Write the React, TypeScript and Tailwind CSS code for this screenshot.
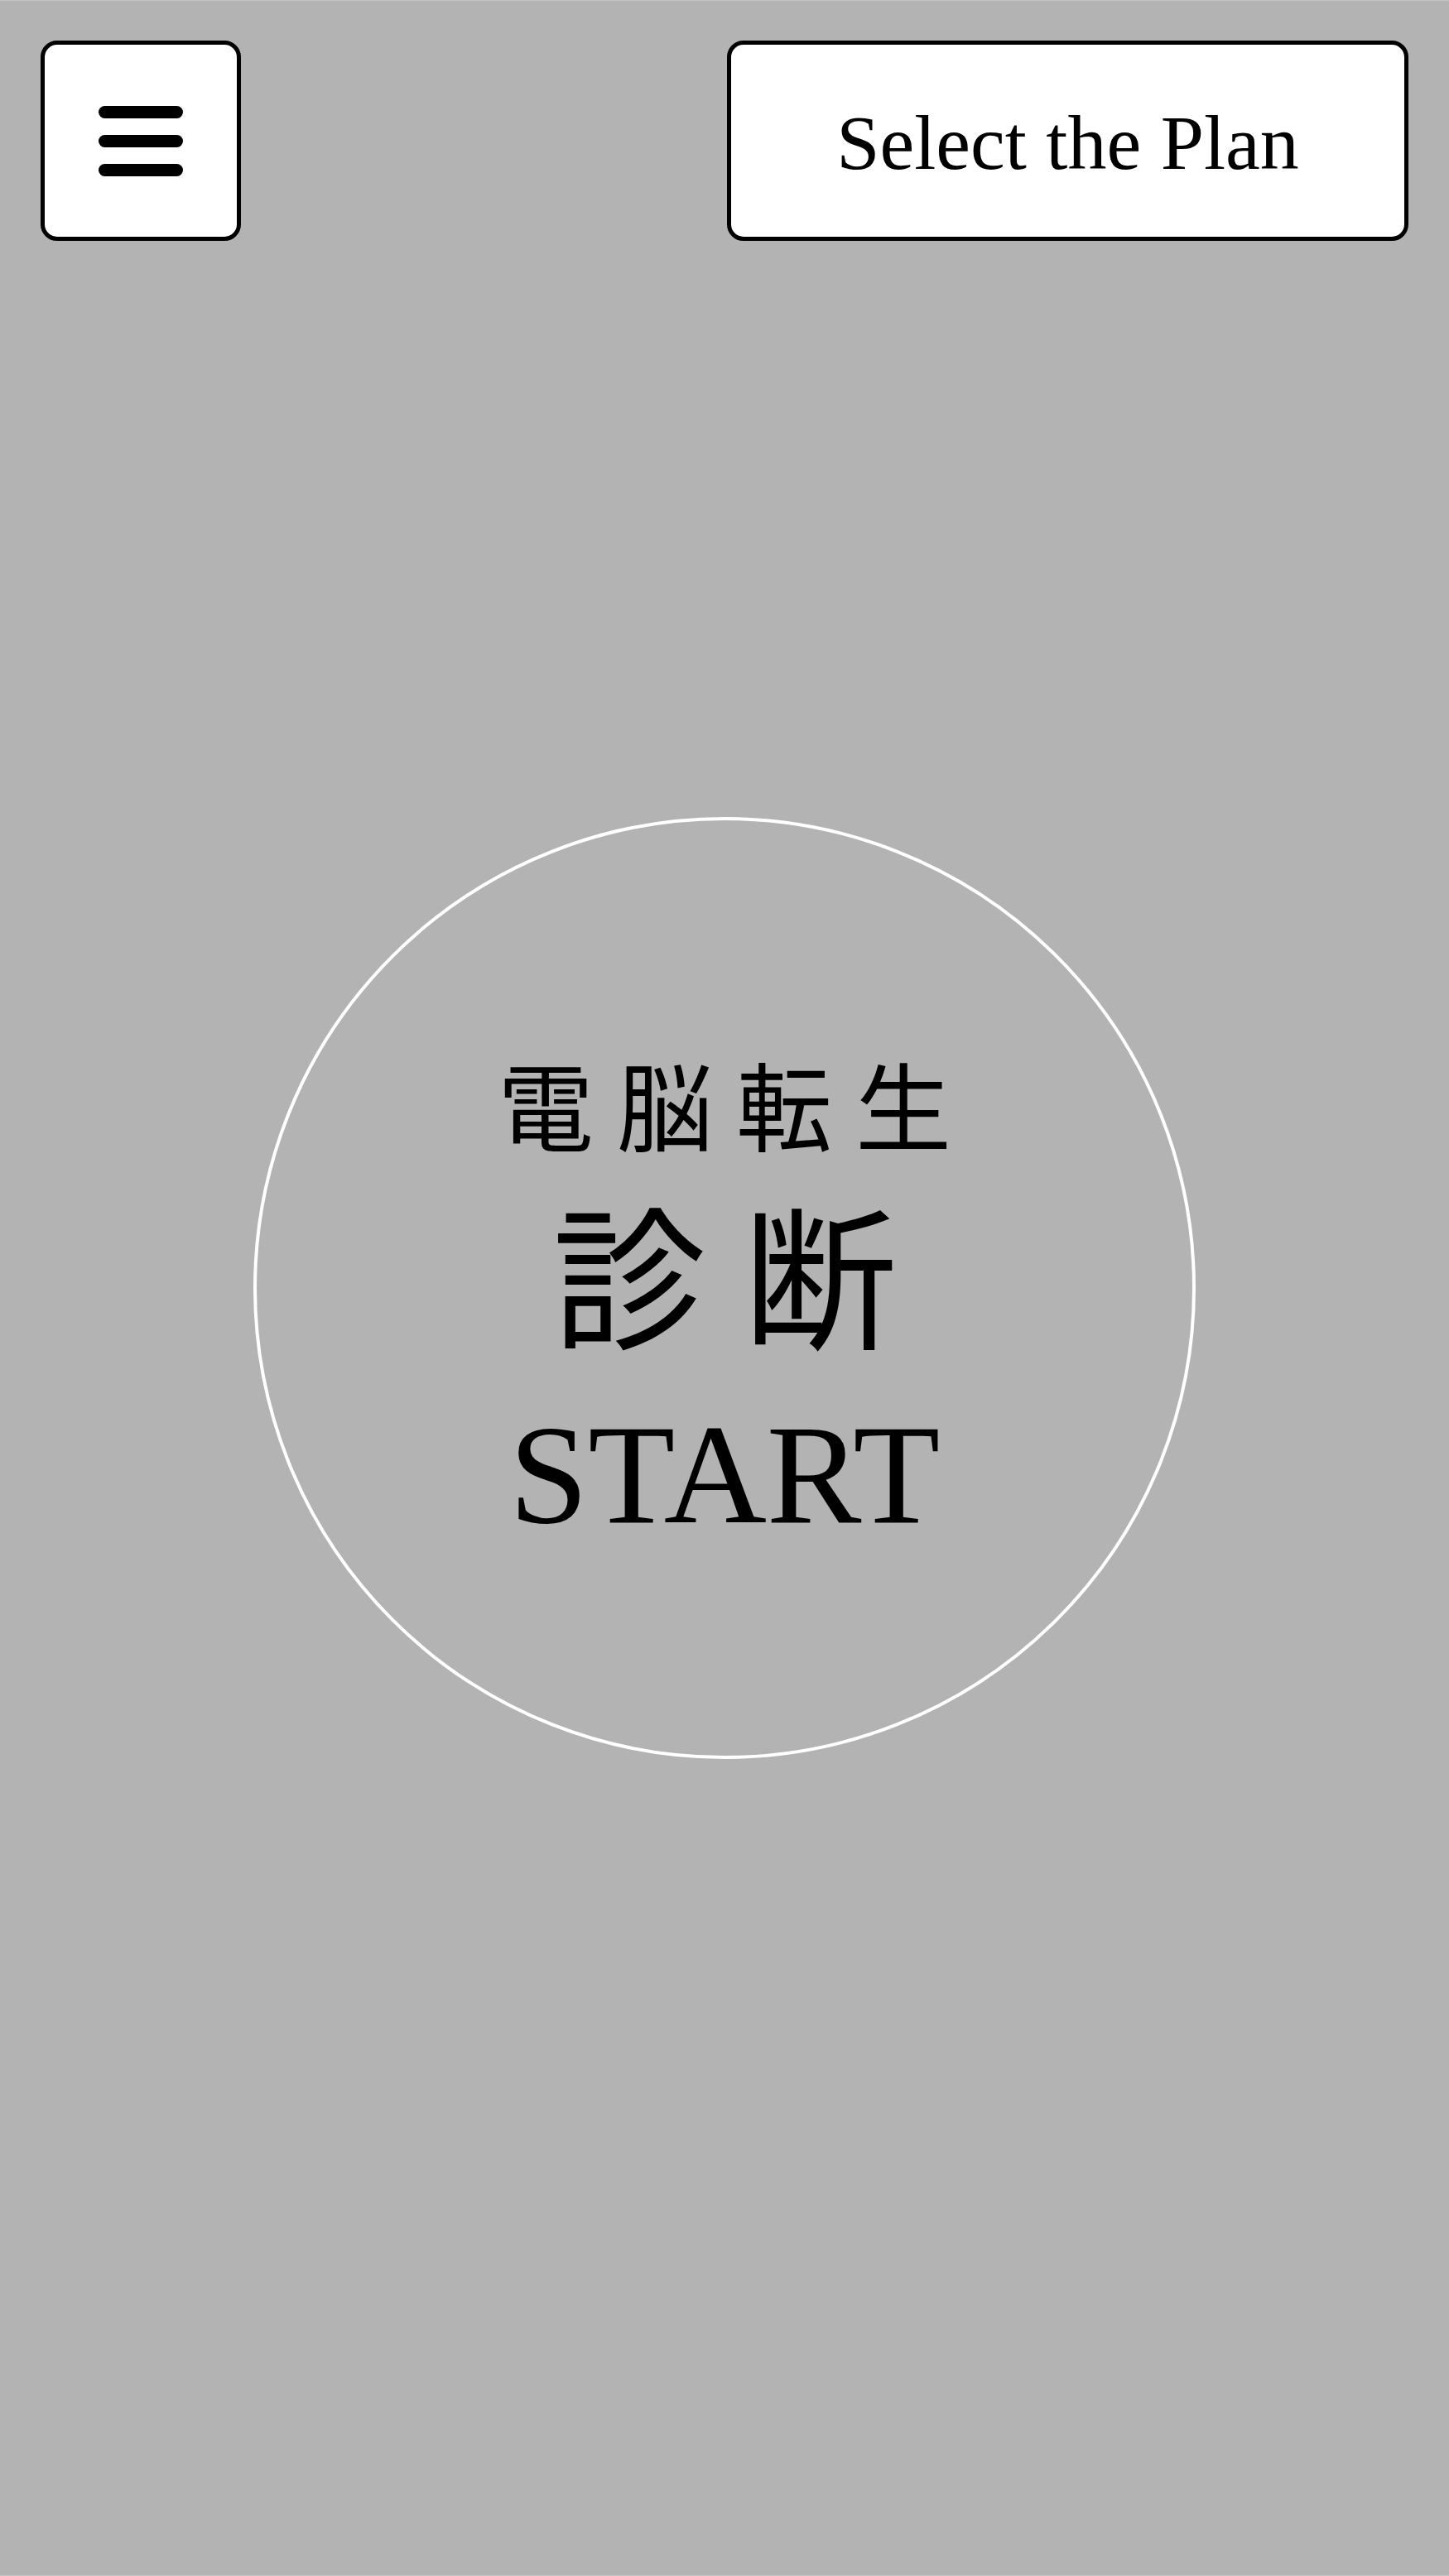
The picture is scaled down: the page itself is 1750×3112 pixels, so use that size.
import React from "react";

const serif = { fontFamily: '"Liberation Serif", "Noto Sans CJK JP", serif' };
const jp = { fontFamily: '"Noto Sans CJK JP", "Liberation Serif", serif' };

function MenuButton() {
  return (
    <button
      type="button"
      className="flex h-[242px] w-[242px] flex-col items-center justify-center gap-[20px] rounded-[20px] border-[5px] border-black bg-white"
    >
      <span className="block h-[15px] w-[102px] rounded-full bg-black" />
      <span className="block h-[15px] w-[102px] rounded-full bg-black" />
      <span className="block h-[15px] w-[102px] rounded-full bg-black" />
    </button>
  );
}

export default function App(): React.JSX.Element {
  return (
    <div className="relative flex h-screen w-full items-center justify-center overflow-hidden border-y border-[#c4c4c4] bg-[#b3b3b3]">
      {/* header */}
      <header className="absolute inset-x-0 top-0 flex items-start justify-between px-[49px] pt-[48px]">
        <MenuButton />
        <button
          type="button"
          className="flex h-[242px] w-[823px] items-center justify-center rounded-[20px] border-[5px] border-black bg-white pt-[4px] text-[94px] leading-none text-black"
          style={serif}
        >
          Select the Plan
        </button>
      </header>

      {/* start circle */}
      <button
        type="button"
        className="flex h-[1138px] w-[1138px] items-center justify-center rounded-full border-4 border-white"
      >
        <div className="flex flex-col items-center pt-[28px] text-black">
          <span className="pl-[28px] text-[116px] leading-none tracking-[28px]" style={jp}>
            電脳転生
          </span>
          <span className="mt-[53px] pl-[44px] text-[186px] leading-none tracking-[44px]" style={jp}>
            診断
          </span>
          <span className="mt-[67px] text-[172px] leading-none" style={serif}>
            START
          </span>
        </div>
      </button>
    </div>
  );
}
